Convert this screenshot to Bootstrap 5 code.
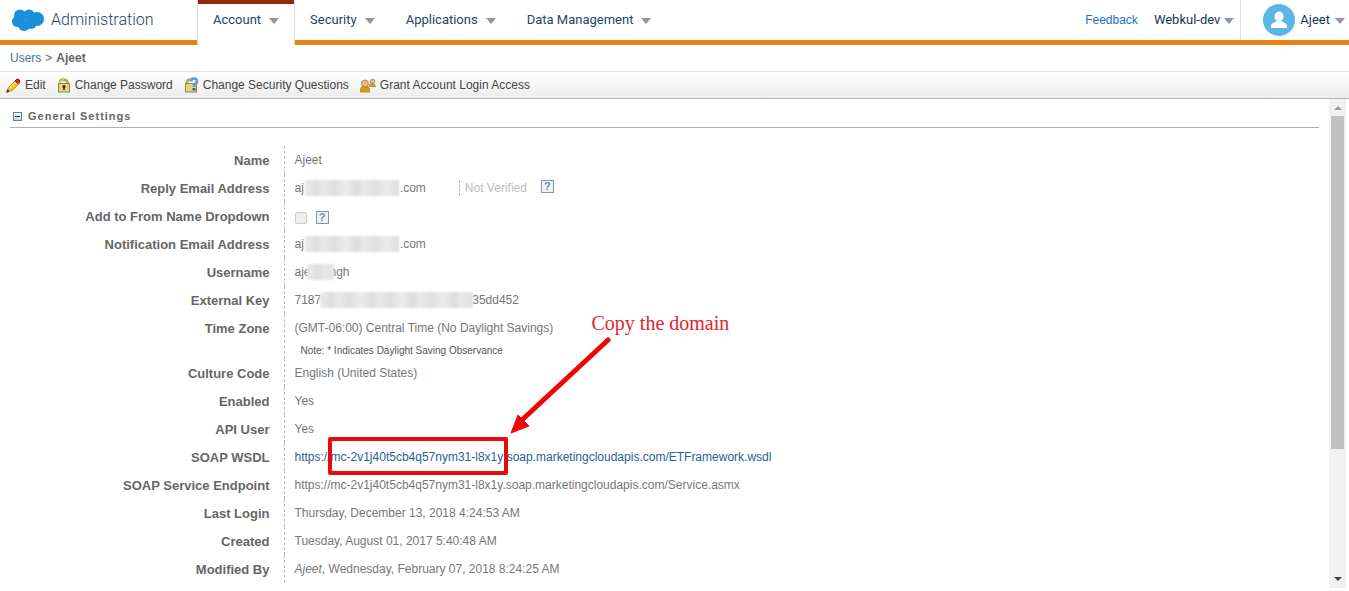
<!DOCTYPE html>
<html lang="en">
<head>
<meta charset="utf-8">
<meta name="viewport" content="width=device-width, initial-scale=1">
<title>Administration - Ajeet</title>
<link href="https://cdn.jsdelivr.net/npm/bootstrap@5.3.0/dist/css/bootstrap.min.css" rel="stylesheet">
<style>
  body { font-family: "Liberation Sans", Arial, sans-serif; font-size: 12px; line-height: 16px; color: #777; background: #fff; }
  a { text-decoration: none; color: #2a6099; }
  .topbar { border-bottom: 5px solid #e4840f; height: 45px; font-family: Roboto, sans-serif; font-size: 13px; }
  .brand { width: 197px; padding-left: 11px; gap: 6px; color: #1d4568; font-size: 16px; font-weight: 300; }
  .tabs { gap: 31px; }
  .tabs a, .account-menu { color: #16325c; gap: 8px; }
  .tabs a { color: #1d4568; }
  .feedback { font: 12px/16px "Liberation Sans", sans-serif; color: #1f6fc0; }
  .account-menu { gap: 4px; font: inherit; background: none; border: 0; padding: 0; }
  .tabs a.active { height: 45px; margin-right: -16px; padding: 0 15px 5px 15px; border: solid #d8dde6; border-width: 0 1px; box-shadow: inset 0 4px #8e2b05; background: #fff; }
  .caret { width: 0; height: 0; border: solid transparent; border-width: 6px 5px 0; border-top-color: #8d98a8; margin-top: 2px; }
  .profile { border-left: 1px solid #d8dde6; padding: 0 4px 0 22px; margin-left: 6px; gap: 5px; }
  .crumbs { height: 26px; padding-left: 10px; color: #666; }
  .crumbs a { color: #4a7098; }
  .toolbar { height: 28px; padding-left: 6px; gap: 11px; border-top: 1px solid #e4e4e4; border-bottom: 1px solid #b5b5b5; background: linear-gradient(#fff, #ececec); }
  .toolbar button { border: 0; padding: 0; background: none; color: #444; gap: 4px; }
  .section-title { margin: 0 10px; padding: 9px 0 3px 3px; gap: 6px; border-bottom: 1px solid #b0b0b0; font-size: 11px; line-height: 16px; font-weight: bold; letter-spacing: 1px; color: #666; }
  .toggle { width: 9px; height: 9px; border: 1px solid #6080a8; background: linear-gradient(#fff, #c5d5e8); padding: 0; }
  .toggle i { display: block; width: 5px; height: 1px; margin: auto; background: #234; }
  .details { margin-top: 18px; }
  .details th { width: 285px; height: 28px; padding: 7px 14px 5px 0; border-right: 1px dashed #bbb; text-align: right; vertical-align: top; font-size: 13px; color: #666; }
  .details td { padding: 6px 0 6px 10px; vertical-align: top; }
  .details tr > :first-child { width: 284px; }
  .note { margin: 9px 0 2px 6px; font-size: 10px; line-height: 12px; color: #555; }
  .masked { display: inline-block; height: 16px; vertical-align: top; margin: 0 1px; background: repeating-linear-gradient(90deg, #ebebeb 0, #dedede 11px, #e8e8e8 18px, #e0e0e0 30px, #ebebeb 41px); filter: blur(1px); }
  .m-email { width: 94px; }
  .m-user { width: 27px; margin: 0 -4px; }
  .m-key { width: 153px; margin: 0 -1px; }
  .status { margin-left: 33px; padding-left: 5px; border-left: 1px dashed #bbb; color: #bbb; }
  .help { width: 13px; height: 13px; margin-left: 14px; padding: 0; border: 1px solid #8899aa; background: #eef3f8; color: #6f8cab; font-size: 11px; line-height: 11px; font-weight: bold; }
  .tick-row { padding-top: 3px; gap: 9px; }
  .tick-row .help { margin-left: 0; }
  .tick { appearance: none; width: 12px; height: 12px; margin: 0; border: 1px solid #ccc; border-radius: 2px; background: #eee; }
  .domain { position: relative; }
  .domain::after { content: ""; position: absolute; inset: -13px -5px -11px -3px; border: 4px solid #e80b0e; border-radius: 2px; }
  .arrow { position: absolute; left: 176px; bottom: 29px; }
  .callout { position: absolute; left: 261px; bottom: 129px; font: 20px/24px "Liberation Serif", serif; color: #e0242c; white-space: nowrap; }
  .scroller { width: 17px; margin-right: 3px; margin-bottom: 3px; background: #f1f1f1; }
  .scroller .thumb { width: 13px; flex: 0 0 68%; margin-top: 6px; background: #c1c1c1; }
  .up, .down { width: 0; height: 0; border: solid transparent; }
  .up { border-width: 0 4px 4px; border-bottom-color: #999; margin-top: 7px; }
  .down { border-width: 4px 4px 0; border-top-color: #444; margin: auto 0 7px; }
</style>
</head>
<body>
<div class="d-flex flex-column min-vh-100">
  <header class="topbar d-flex align-items-stretch">
    <div class="brand d-flex align-items-center">
      <svg width="34" height="24" viewBox="0 0 34 24" aria-hidden="true"><g fill="#1b8fd8"><circle cx="9" cy="7.500" r="6"/><circle cx="18" cy="7" r="5.500"/><circle cx="26" cy="11" r="7"/><circle cx="6.500" cy="13.500" r="5.500"/><circle cx="13" cy="17" r="6"/><circle cx="20" cy="15" r="6"/></g></svg>
      <span>Administration</span>
    </div>
    <nav class="tabs d-flex align-items-center">
      <a href="#" class="active align-self-start d-flex align-items-center">Account <span class="caret"></span></a>
      <a href="#" class="d-flex align-items-center">Security <span class="caret"></span></a>
      <a href="#" class="d-flex align-items-center">Applications <span class="caret"></span></a>
      <a href="#" class="d-flex align-items-center">Data Management <span class="caret"></span></a>
    </nav>
    <div class="ms-auto d-flex align-items-stretch">
      <a href="#" class="feedback d-flex align-items-center me-3">Feedback</a>
      <button class="account-menu d-flex align-items-center">Webkul-dev <span class="caret"></span></button>
      <button class="account-menu d-flex align-items-stretch">
        <span class="profile d-flex align-items-center">
          <svg width="32" height="32" viewBox="0 0 32 32" aria-hidden="true"><circle cx="16" cy="16" r="16" fill="#5db4e8"/><ellipse cx="16" cy="12.500" rx="4.500" ry="5" fill="#fff"/><path d="M8 24v-2c0-3 4-3.500 5.500-5h5c1.500 1.500 5.500 2 5.500 5v2z" fill="#fff"/></svg>
          <span>Ajeet</span><span class="caret"></span>
        </span>
      </button>
    </div>
  </header>
  <div class="crumbs d-flex align-items-center gap-1"><a href="#">Users</a><span>&gt;</span><b>Ajeet</b></div>
  <div class="toolbar d-flex align-items-center">
    <button class="d-flex align-items-center">
      <svg width="15" height="16" viewBox="0 0 15 16" aria-hidden="true"><path d="M1 15l1.500-4.500 8-8 3.500 3.500-8 7.500z" fill="#f5c81e" stroke="#a87c18" stroke-width=".8"/><path d="M9 4l2-2q2.500-.5 3 2.500l-2 2z" fill="#d02a20" stroke="#7a1510" stroke-width=".8"/><path d="M4 11l6-6" stroke="#fff08a"/><path d="M0 16l1.500-4 2 2.500z" fill="#333"/></svg>Edit</button>
    <button class="d-flex align-items-center">
      <svg width="14" height="16" viewBox="0 0 14 16" aria-hidden="true"><path d="M3 8V5.500Q3 2.500 6.500 2.500t4 3V8" fill="none" stroke="#b8a24c" stroke-width="2.500"/><path d="M3 7V5.500Q3.500 2.500 6.500 2.500" fill="none" stroke="#efe6a8"/><rect x="1.500" y="6.500" width="11" height="8.500" fill="#e5d47c" stroke="#998538"/><circle cx="7" cy="9.500" r="1.500" fill="#222"/><path d="M7 9v4" stroke="#222" stroke-width="1.500"/></svg>Change Password</button>
    <button class="d-flex align-items-center">
      <svg width="15" height="16" viewBox="0 0 15 16" aria-hidden="true"><path d="M3 8V5.500Q3 2.500 6.500 2.500" fill="none" stroke="#b8a24c" stroke-width="2.500"/><rect x="1.500" y="6.500" width="11" height="8.500" fill="#e5d47c" stroke="#998538"/><path d="M7 4.500q0-3 3-3t3 3q0 2-3 3V10" fill="none" stroke="#5f96ea" stroke-width="2.500"/><rect x="8.500" y="11" width="3" height="2.500" fill="#315fae"/></svg>Change Security Questions</button>
    <button class="d-flex align-items-center">
      <svg width="16" height="16" viewBox="0 0 16 16" aria-hidden="true"><g stroke="#a87420" stroke-width=".7"><path d="M9 9.500q0-3 3-3t3.500 3z" fill="#e0a030"/><circle cx="12.500" cy="4.500" r="2.300" fill="#e8bb78"/><path d="M.5 15v-3Q1 9 5 9t4.500 3v3z" fill="#dc9a13"/><circle cx="5" cy="6.500" r="3.500" fill="#e8b974"/></g></svg>Grant Account Login Access</button>
  </div>
  <div class="d-flex flex-grow-1">
    <main class="flex-grow-1">
      <h2 class="section-title d-flex align-items-center mb-0"><button class="toggle" aria-label="Collapse"><i></i></button>General Settings</h2>
      <table class="details w-100">
        <tbody>
        <tr><th scope="row">Name</th><td>Ajeet</td></tr>
        <tr><th scope="row">Reply Email Address</th><td><div class="d-flex">aj<span class="masked m-email"></span>.com<span class="status">Not Verified</span><button class="help" aria-label="Verification help">?</button></div></td></tr>
        <tr><th scope="row"><label for="from">Add to From Name Dropdown</label></th><td><div class="tick-row d-flex align-items-center"><input id="from" class="tick" type="checkbox" disabled><button class="help" aria-label="Dropdown help">?</button></div></td></tr>
        <tr><th scope="row">Notification Email Address</th><td>aj<span class="masked m-email"></span>.com</td></tr>
        <tr><th scope="row">Username</th><td>aje<span class="masked m-user"></span>ngh</td></tr>
        <tr><th scope="row">External Key</th><td>7187<span class="masked m-key"></span>35dd452</td></tr>
        <tr><th scope="row">Time Zone</th><td class="pb-0">(GMT-06:00) Central Time (No Daylight Savings)<div class="note">Note: * Indicates Daylight Saving Observance</div></td></tr>
        <tr><th scope="row">Culture Code</th><td>English (United States)</td></tr>
        <tr><th scope="row">Enabled</th><td>Yes</td></tr>
        <tr><th scope="row">API User</th><td>Yes</td></tr>
        <tr><th scope="row">SOAP WSDL</th><td><a href="#">https://<span class="domain">mc-2v1j40t5cb4q57nym31-l8x1y<svg class="arrow" width="104" height="98" viewBox="0 0 104 98" aria-hidden="true"><path d="M101 3L16 82" stroke="#f00505" stroke-width="5" stroke-linecap="round"/><path d="M4 96l7-18 11 11z" fill="#f00505" stroke="#f00505"/></svg><span class="callout">Copy the domain</span></span>.soap.marketingcloudapis.com/ETFramework.wsdl</a></td></tr>
        <tr><th scope="row">SOAP Service Endpoint</th><td>https://mc-2v1j40t5cb4q57nym31-l8x1y.soap.marketingcloudapis.com/Service.asmx</td></tr>
        <tr><th scope="row">Last Login</th><td>Thursday, December 13, 2018 4:24:53 AM</td></tr>
        <tr><th scope="row">Created</th><td>Tuesday, August 01, 2017 5:40:48 AM</td></tr>
        <tr><th scope="row">Modified By</th><td><i>Ajeet</i>, Wednesday, February 07, 2018 8:24:25 AM</td></tr>
        </tbody>
      </table>
    </main>
    <div class="scroller d-flex flex-column align-items-center" aria-hidden="true"><span class="up"></span><span class="thumb"></span><span class="down"></span></div>
  </div>
</div>
<script src="https://cdn.jsdelivr.net/npm/bootstrap@5.3.0/dist/js/bootstrap.bundle.min.js"></script>
</body>
</html>
